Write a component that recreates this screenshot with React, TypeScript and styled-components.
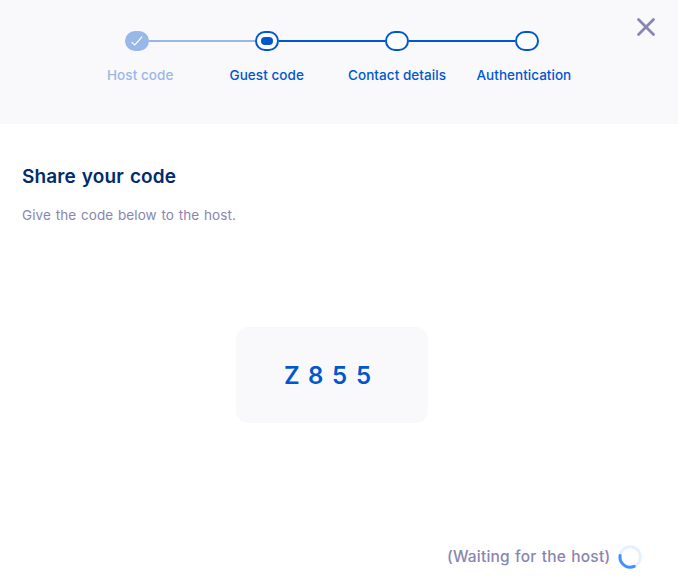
import React from "react";
import styled, { createGlobalStyle } from "styled-components";

const Global = createGlobalStyle`
  * { box-sizing: border-box; }
  body { margin: 0; background: #fff; font-family: Inter, "Noto Sans", sans-serif; }
`;

const Page = styled.main`
  width: 678px;
  height: 584px;
  display: flex;
  flex-direction: column;
  overflow: hidden;
  background: #fff;
`;
const Header = styled.header`
  height: 124px;
  flex: none;
  display: flex;
  background: #f9f9fc;
  padding-left: 105px;
`;
const Stepper = styled.div`
  width: 470px;
  padding-top: 31px;
`;
const Track = styled.div`
  display: flex;
  align-items: center;
  height: 20px;
  padding-left: 20px;
`;
const Node = styled.span<{ $done?: boolean }>`
  width: 24px;
  height: 20px;
  flex: none;
  display: flex;
  align-items: center;
  justify-content: center;
  border-radius: 10px;
  border: 2px solid ${(p) => (p.$done ? "#98b8e9" : "#0057d0")};
  background: ${(p) => (p.$done ? "#98b8e9" : "#fff")};
`;
const Pill = styled.span`
  width: 12px;
  height: 8px;
  border-radius: 4px;
  background: #0057d0;
`;
const Line = styled.span<{ $done?: boolean }>`
  width: 106px;
  height: 2px;
  flex: none;
  background: ${(p) => (p.$done ? "#98b8e9" : "#0057d0")};
`;
const Labels = styled.div`
  display: flex;
  margin-top: 14px;
`;
const Label = styled.span<{ $width: number; $gap?: number; $spacing: number; $done?: boolean }>`
  width: ${(p) => p.$width}px;
  margin-left: ${(p) => p.$gap ?? 0}px;
  letter-spacing: ${(p) => p.$spacing}px;
  flex: none;
  font-size: 13.5px;
  line-height: 20px;
  font-weight: 500;
  white-space: nowrap;
  color: ${(p) => (p.$done ? "#98b8e9" : "#0057d0")};
`;
const Close = styled.button`
  margin: 17px 0 0 61px;
  width: 20px;
  height: 20px;
  padding: 0;
  border: 0;
  background: none;
`;
const Svg = styled.svg`
  display: block;
  flex: none;
`;
const Body = styled.section`
  flex: 1;
  display: flex;
  flex-direction: column;
  padding: 39px 36px 15px 22px;
`;
const Title = styled.h1`
  margin: 0;
  font-size: 19px;
  line-height: 28px;
  font-weight: 600;
  letter-spacing: 0.1px;
  word-spacing: 1.2px;
  color: #002c6c;
`;
const Hint = styled.p`
  margin: 14px 0 0;
  font-size: 13.5px;
  line-height: 20px;
  letter-spacing: 0.1px;
  word-spacing: 0.8px;
  color: #8985b1;
`;
const CodeBox = styled.div`
  width: 192px;
  height: 96px;
  margin: 102px 0 0 214px;
  padding: 2px 0 0 48px;
  display: flex;
  align-items: center;
  border-radius: 12px;
  background: #f9f9fc;
  color: #0057d0;
  font-size: 24px;
  font-weight: 600;
`;
const Digit = styled.span`
  width: 24px;
  line-height: 32px;
`;
const Footer = styled.footer`
  display: flex;
  align-items: center;
  justify-content: flex-end;
  gap: 8px;
  margin-top: auto;
`;
const Status = styled.span`
  width: 163px;
  white-space: nowrap;
  font-size: 15.5px;
  line-height: 24px;
  font-weight: 500;
  letter-spacing: 0.2px;
  word-spacing: 0.9px;
  color: #8985b1;
`;

export default function App() {
  return (
    <>
      <Global />
      <Page>
        <Header>
          <Stepper>
            <Track>
              <Node $done>
                <Svg width="14" height="12" viewBox="0 0 14 12" fill="none" stroke="#fff" strokeWidth="1.2">
                  <path d="M1.6 7.2 4.8 10 12.2 1.7" />
                </Svg>
              </Node>
              <Line $done />
              <Node><Pill /></Node>
              <Line />
              <Node />
              <Line />
              <Node />
            </Track>
            <Labels>
              <Label $done $gap={2} $width={67} $spacing={0.06}>Host code</Label>
              <Label $gap={55.5} $width={75.5} $spacing={0.06}>Guest code</Label>
              <Label $gap={43} $width={99} $spacing={0.06}>Contact details</Label>
              <Label $gap={29.5} $width={96} $spacing={0.03}>Authentication</Label>
            </Labels>
          </Stepper>
          <Close aria-label="Close">
            <Svg width="20" height="20" viewBox="0 0 20 20" stroke="#8985b1" strokeWidth="2.8" strokeLinecap="round">
              <path d="M2.5 2.5 17.5 17.5M17.5 2.5 2.5 17.5" />
            </Svg>
          </Close>
        </Header>
        <Body>
          <Title>Share your code</Title>
          <Hint>Give the code below to the host.</Hint>
          <CodeBox>
            {["Z", "8", "5", "5"].map((c, i) => <Digit key={i}>{c}</Digit>)}
          </CodeBox>
          <Footer>
            <Status>(Waiting for the host)</Status>
            <Svg width="24" height="24" viewBox="0 0 24 24" fill="none" strokeWidth="3" strokeLinecap="round">
              <circle cx="12.2" cy="12" r="10.2" stroke="#e6f1ff" />
              <path d="M2.1 10.5A10.2 10.2 0 0 0 16.2 21.4" stroke="#3f91ff" />
            </Svg>
          </Footer>
        </Body>
      </Page>
    </>
  );
}
